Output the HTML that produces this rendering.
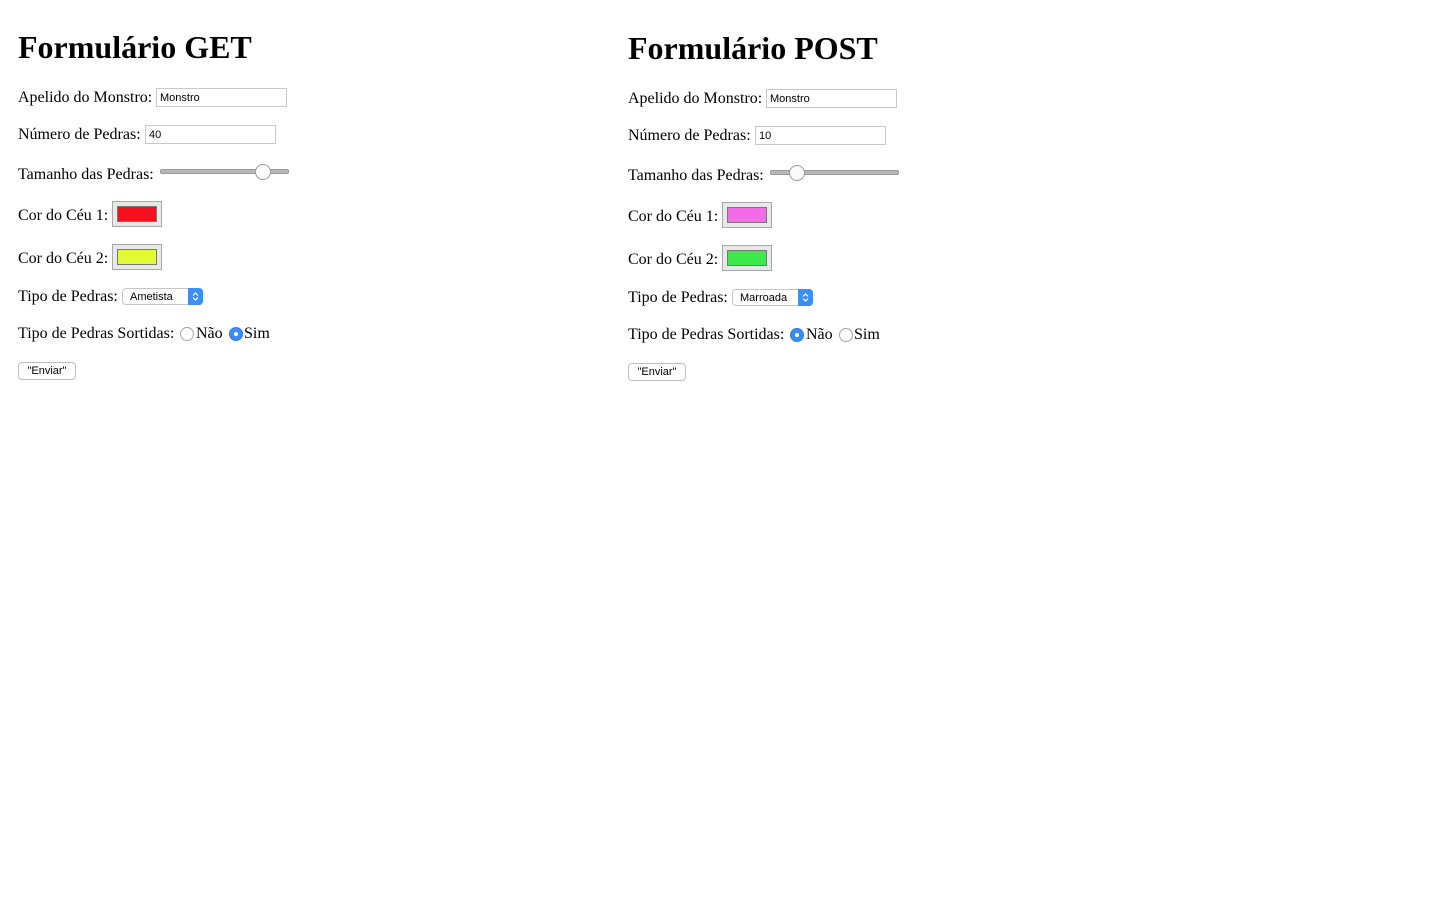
<!DOCTYPE html>
<html><head><meta charset="utf-8"><style>
body{margin:0;width:1440px;height:900px;background:#fff;font-family:"Liberation Serif",serif;color:#000;position:relative;overflow:hidden}
h1{position:absolute;margin:0;font-size:32px;font-weight:bold;line-height:36px}
.t{position:absolute;font-size:16px;line-height:18px;white-space:nowrap;margin-top:1px}
.in{position:absolute;height:17px;border:1px solid #c9c9c9;font:11px "Liberation Sans",sans-serif;line-height:19px;padding-left:3px;box-sizing:content-box;background:#fff}
.tr{position:absolute;height:3px;border-radius:2px;background:#b8b8b8;border:1px solid #999}
.th{position:absolute;width:14px;height:14px;border-radius:50%;background:#fafafa;border:1px solid #9a9a9a}
.col{position:absolute;width:48px;height:24px;border:1px solid #a8a8a8;background:#e8e8e8}
.col i{position:absolute;left:4px;top:4px;width:38px;height:14px;border:1px solid #777}
.sel{position:absolute;height:17px;border:1px solid #c6c6c6;border-radius:4px;background:#fff;font:11px "Liberation Sans",sans-serif;line-height:17px;padding-left:7px;box-sizing:border-box}
.sel b{position:absolute;right:-1px;top:-1px;width:15px;height:17px;background:#3e8ef7;border-radius:0 4px 4px 0}
.sel b svg{position:absolute;left:4px;top:4px}
.r{position:absolute;width:12px;height:12px;border-radius:50%;border:1px solid #a5a5a5;background:#fff}
.r.on{background:#3b8cf5;border-color:#2f7de6}
.r.on:after{content:"";position:absolute;left:4px;top:4px;width:4px;height:4px;border-radius:50%;background:#fff}
.btn{position:absolute;height:16px;border:1px solid #bdbdbd;border-radius:4px;background:#fff;font:11px "Liberation Sans",sans-serif;line-height:17px;text-align:center}
</style></head><body>
<h1 style="left:18px;top:29px">Formulário GET</h1>
<div class="t" style="left:18px;top:88px">Apelido do Monstro:</div>
<div class="in" style="left:156px;top:88px;width:126px">Monstro</div>
<div class="t" style="left:18px;top:125px">Número de Pedras:</div>
<div class="in" style="left:145px;top:125px;width:126px">40</div>
<div class="t" style="left:18px;top:165px">Tamanho das Pedras:</div>
<div class="tr" style="left:160px;top:169px;width:127px"></div>
<div class="th" style="left:255px;top:164px"></div>
<div class="t" style="left:18px;top:206px">Cor do Céu 1:</div>
<div class="col" style="left:112px;top:201px"><i style="background:#f5101f"></i></div>
<div class="t" style="left:18px;top:249px">Cor do Céu 2:</div>
<div class="col" style="left:112px;top:244px"><i style="background:#e2f936"></i></div>
<div class="t" style="left:18px;top:287px">Tipo de Pedras:</div>
<div class="sel" style="left:122px;top:288px;width:81px">Ametista<b><svg width="7" height="9" viewBox="0 0 7 9"><path d="M1 3.5L3.5 1L6 3.5M1 5.5L3.5 8L6 5.5" fill="none" stroke="#fff" stroke-width="1.2"/></svg></b></div>
<div class="t" style="left:18px;top:324px">Tipo de Pedras Sortidas:</div>
<div class="r" style="left:180px;top:327px"></div>
<div class="t" style="left:196px;top:324px">Não</div>
<div class="r on" style="left:229px;top:327px"></div>
<div class="t" style="left:244px;top:324px">Sim</div>
<div class="btn" style="left:18px;top:362px;width:56px">"Enviar"</div>

<h1 style="left:628px;top:30px">Formulário POST</h1>
<div class="t" style="left:628px;top:89px">Apelido do Monstro:</div>
<div class="in" style="left:766px;top:89px;width:126px">Monstro</div>
<div class="t" style="left:628px;top:126px">Número de Pedras:</div>
<div class="in" style="left:755px;top:126px;width:126px">10</div>
<div class="t" style="left:628px;top:166px">Tamanho das Pedras:</div>
<div class="tr" style="left:770px;top:170px;width:127px"></div>
<div class="th" style="left:789px;top:165px"></div>
<div class="t" style="left:628px;top:207px">Cor do Céu 1:</div>
<div class="col" style="left:722px;top:202px"><i style="background:#f26be7"></i></div>
<div class="t" style="left:628px;top:250px">Cor do Céu 2:</div>
<div class="col" style="left:722px;top:245px"><i style="background:#3de94a"></i></div>
<div class="t" style="left:628px;top:288px">Tipo de Pedras:</div>
<div class="sel" style="left:732px;top:289px;width:81px">Marroada<b><svg width="7" height="9" viewBox="0 0 7 9"><path d="M1 3.5L3.5 1L6 3.5M1 5.5L3.5 8L6 5.5" fill="none" stroke="#fff" stroke-width="1.2"/></svg></b></div>
<div class="t" style="left:628px;top:325px">Tipo de Pedras Sortidas:</div>
<div class="r on" style="left:790px;top:328px"></div>
<div class="t" style="left:806px;top:325px">Não</div>
<div class="r" style="left:839px;top:328px"></div>
<div class="t" style="left:854px;top:325px">Sim</div>
<div class="btn" style="left:628px;top:363px;width:56px">"Enviar"</div>
</body></html>
